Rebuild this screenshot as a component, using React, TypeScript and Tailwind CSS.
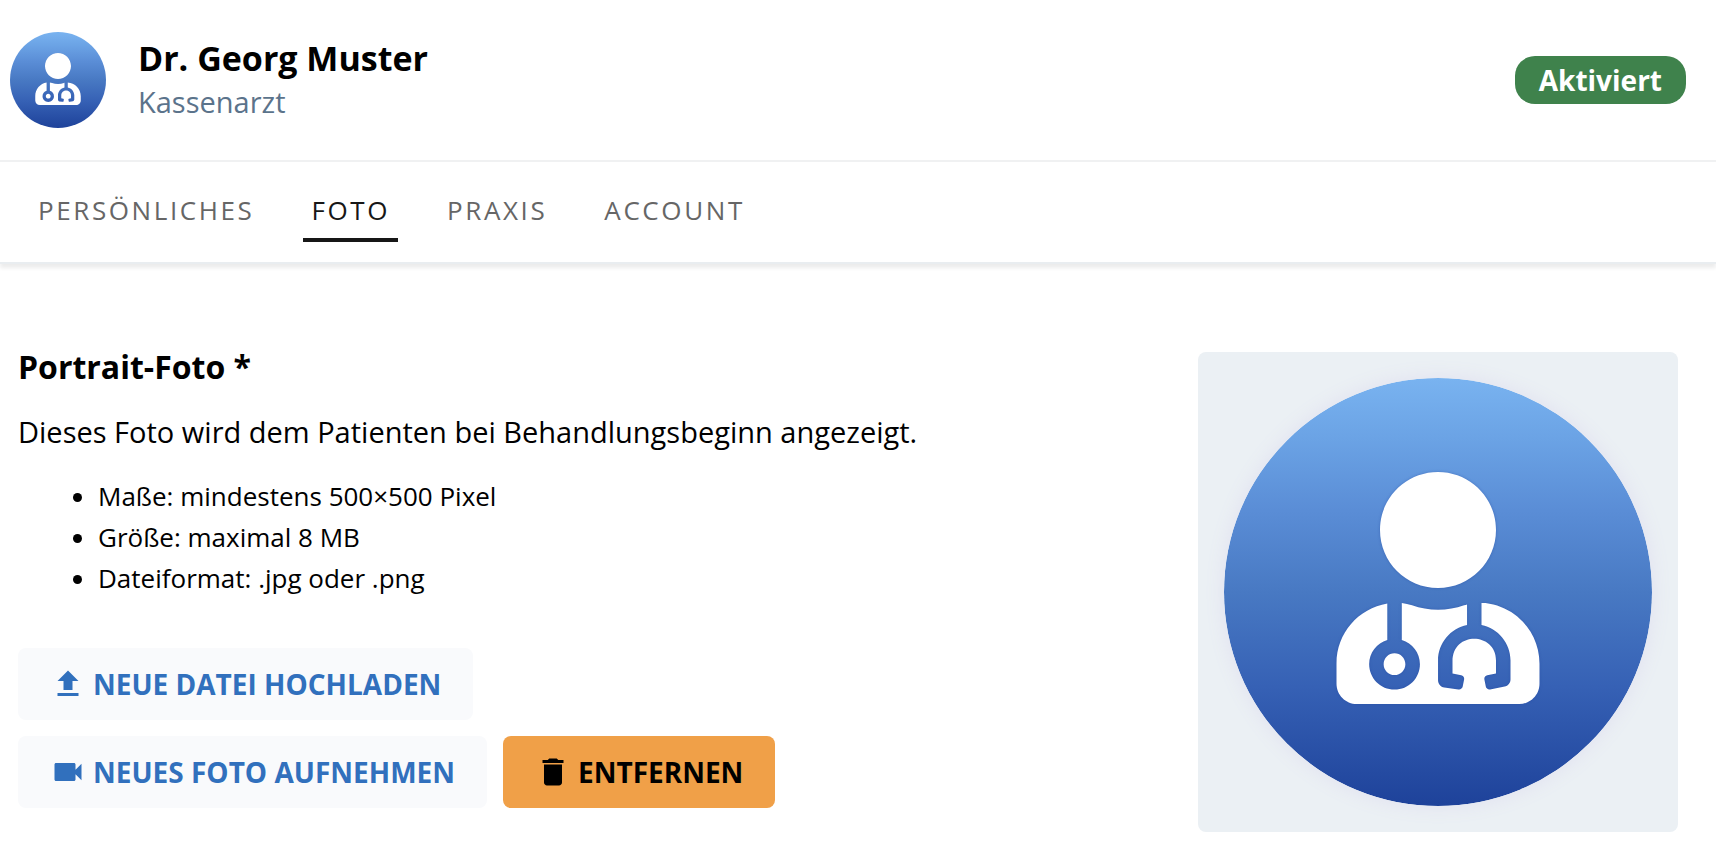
import { useId, type ReactNode } from 'react';
import { FaUserMd } from 'react-icons/fa';
import { MdDelete, MdFileUpload, MdVideocam } from 'react-icons/md';
import clsx from 'clsx';

const tabs = ['Persönliches', 'Foto', 'Praxis', 'Account'];

const requirements = [
  'Maße: mindestens 500×500 Pixel',
  'Größe: maximal 8 MB',
  'Dateiformat: .jpg oder .png',
];

function DoctorAvatar({ className }: { className?: string }) {
  const id = useId();
  return (
    <svg viewBox="0 0 428 428" role="img" aria-label="Portrait" className={className}>
      <defs>
        <linearGradient id={id} x1="0" y1="0" x2="0" y2="1">
          <stop offset="0" stopColor="#79b3f0" />
          <stop offset="0.14" stopColor="#6ba3e5" />
          <stop offset="0.31" stopColor="#5a8dd6" />
          <stop offset="0.5" stopColor="#4879c3" />
          <stop offset="0.72" stopColor="#3661b5" />
          <stop offset="1" stopColor="#1e429a" />
        </linearGradient>
      </defs>
      <circle cx="214" cy="214" r="214" fill={`url(#${id})`} />
      <FaUserMd
        x={98}
        y={94}
        size={232}
        color="#fff"
        className="drop-shadow-[0_0_3px_#1e429a66]"
      />
    </svg>
  );
}

function ActionButton({
  icon,
  children,
  warning,
}: {
  icon: ReactNode;
  children: ReactNode;
  warning?: boolean;
}) {
  return (
    <button
      type="button"
      className={clsx(
        'flex h-[72px] items-center gap-[7px] rounded-lg px-8 text-[28px] font-bold uppercase',
        warning ? 'bg-[#f0a048] text-black' : 'bg-[#f9fafc] text-[#3170bd]',
      )}
    >
      {icon}
      {children}
    </button>
  );
}

export default function App() {
  return (
    <div className="min-h-screen bg-white font-['Open_Sans',sans-serif] text-black">
      <header className="flex items-center gap-8 border-b-2 border-[#f0f1f2] py-8 pr-[30px] pl-2.5">
        <DoctorAvatar className="size-24 shrink-0" />
        <div className="grow pb-1">
          <h1 className="text-[34px] leading-12 font-bold">Dr. Georg Muster</h1>
          <p className="text-[29px] leading-10 font-medium text-[#5b738b]">Kassenarzt</p>
        </div>
        <span className="rounded-[20px] bg-[#3f824c] px-6 text-[28px] leading-12 font-bold text-white">
          Aktiviert
        </span>
      </header>

      <nav className="flex gap-[41px] border-b-2 border-[#e9edf0] px-[30px] pt-[18px] pb-5 shadow-[0_4px_4px_#00000014]">
        {tabs.map((tab) => (
          <a
            key={tab}
            href={`#${tab.toLowerCase()}`}
            aria-current={tab === 'Foto' ? 'page' : undefined}
            className={clsx(
              'border-b-4 px-2 pt-2.5 pb-2 text-[26px] leading-10 font-medium tracking-widest uppercase',
              tab === 'Foto' ? 'border-[#171717] text-[#171717]' : 'border-transparent text-[#666]',
            )}
          >
            {tab}
          </a>
        ))}
      </nav>

      <main className="flex items-start justify-between gap-8 pt-[88px] pr-[38px] pb-6 pl-[18px]">
        <section>
          <h2 className="text-[32px] leading-[30px] font-bold">Portrait-Foto *</h2>
          <p className="mt-[30px] text-[29px] leading-10">
            Dieses Foto wird dem Patienten bei Behandlungsbeginn angezeigt.
          </p>
          <ul className="mt-6 list-disc pl-20 text-[26px] leading-[41px]">
            {requirements.map((item) => (
              <li key={item}>{item}</li>
            ))}
          </ul>
          <div className="mt-[49px] flex flex-col items-start gap-4">
            <ActionButton icon={<MdFileUpload size={36} />}>Neue Datei hochladen</ActionButton>
            <div className="flex flex-wrap gap-4">
              <ActionButton icon={<MdVideocam size={36} />}>Neues Foto aufnehmen</ActionButton>
              <ActionButton warning icon={<MdDelete size={36} />}>
                Entfernen
              </ActionButton>
            </div>
          </div>
        </section>
        <div className="shrink-0 rounded-lg bg-[#ebf0f4] p-[26px]">
          <DoctorAvatar className="size-[428px] rounded-full shadow-[0_0_20px_#e0e0f0]" />
        </div>
      </main>
    </div>
  );
}
